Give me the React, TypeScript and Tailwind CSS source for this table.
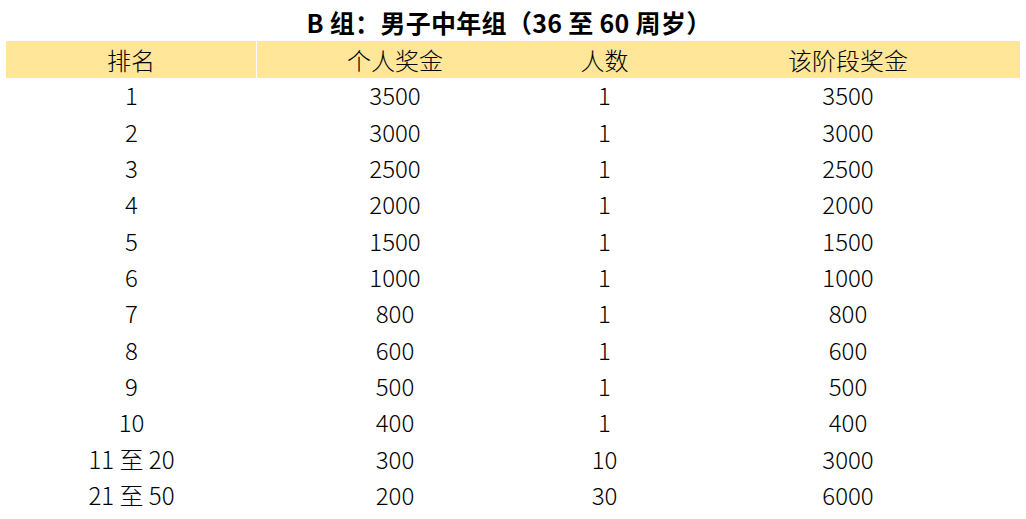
const rows: [string, string, string, string][] = [
  ["1", "3500", "1", "3500"],
  ["2", "3000", "1", "3000"],
  ["3", "2500", "1", "2500"],
  ["4", "2000", "1", "2000"],
  ["5", "1500", "1", "1500"],
  ["6", "1000", "1", "1000"],
  ["7", "800", "1", "800"],
  ["8", "600", "1", "600"],
  ["9", "500", "1", "500"],
  ["10", "400", "1", "400"],
  ["11 至 20", "300", "10", "3000"],
  ["21 至 50", "200", "30", "6000"],
];

const font = { fontFamily: '"Noto Sans CJK SC", "Noto Sans", sans-serif' };

export default function App() {
  return (
    <div className="w-[1026px] h-[519px] bg-white text-black overflow-hidden pl-[6px]" style={font}>
      <div className="w-[1014px]">
        <div className="h-[41px] flex items-center justify-center text-[25px] font-bold leading-none pt-[4px] pr-[8px] tracking-[0.3px]">
          B 组：男子中年组（36 至 60 周岁）
        </div>
        <div className="h-[37px] flex bg-[#ffe699] text-[24px] font-light leading-none">
          <div className="w-[250px] flex items-center justify-center">排名</div>
          <div className="w-[1px] bg-white" />
          <div className="w-[276px] flex items-center justify-center">个人奖金</div>
          <div className="w-[143px] flex items-center justify-center">人数</div>
          <div className="flex-1 flex items-center justify-center">该阶段奖金</div>
        </div>
        {rows.map((r) => (
          <div key={r[0]} className="h-[36.36px] flex text-[24px] font-light leading-none pb-[2px]">
            <div className="w-[251px] flex items-center justify-center whitespace-pre">{r[0]}</div>
            <div className="w-[276px] flex items-center justify-center">{r[1]}</div>
            <div className="w-[143px] flex items-center justify-center">{r[2]}</div>
            <div className="flex-1 flex items-center justify-center">{r[3]}</div>
          </div>
        ))}
      </div>
    </div>
  );
}
